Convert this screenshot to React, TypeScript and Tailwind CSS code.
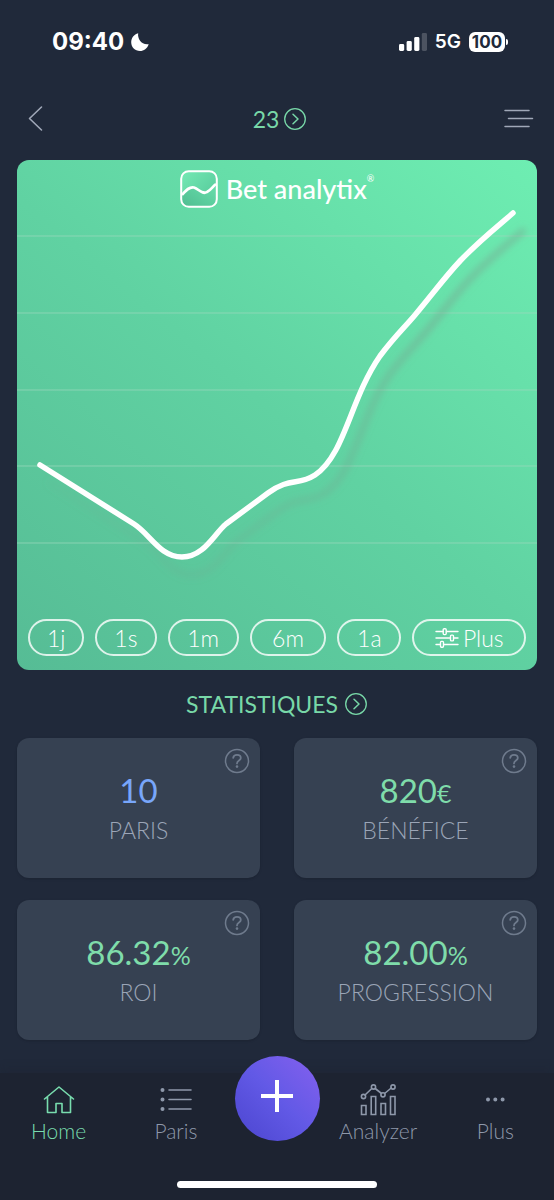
import type { ReactNode } from 'react';

interface RangeOption {
    label: string;
    className: string;
}

interface Stat {
    label: string;
    value: string;
    unit?: string;
    color: string;
}

const ranges: RangeOption[] = [
    { label: '1j', className: 'flex-[52_1_0%]' },
    { label: '1s', className: 'flex-[57_1_0%]' },
    { label: '1m', className: 'flex-[67_1_0%]' },
    { label: '6m', className: 'flex-[72_1_0%]' },
    { label: '1a', className: 'flex-[60_1_0%]' },
];

const stats: Stat[] = [
    { label: 'PARIS', value: '10', color: 'text-[#78a6fa]' },
    { label: 'BÉNÉFICE', value: '820', unit: '€', color: 'text-[#7fdcaa]' },
    { label: 'ROI', value: '86.32', unit: '%', color: 'text-[#7fdcaa]' },
    { label: 'PROGRESSION', value: '82.00', unit: '%', color: 'text-[#7fdcaa]' },
];

const gridLines = [28, 105, 182, 258, 335];

const curve =
    'M23 257 L117 316 C133 326 143 349 165 349 C187 349 197 326 209 316 L251 285 C273 269 281 278 298 267 C328 247 333 191 363 148 C378 128 388 119 398 107 C418 83 428 69 443 53 C463 32 480 19 496 5';

function CircleChevron() {
    return (
        <svg className="size-6" viewBox="0 0 24 24" fill="none" stroke="currentColor" strokeLinecap="round" strokeLinejoin="round" aria-hidden="true">
            <circle cx="12" cy="12" r="10.3" strokeWidth="1.3" />
            <path d="M10 7.2 15 12 10 16.8" strokeWidth="1.5" />
        </svg>
    );
}

function StatusBar() {
    return (
        <div className="flex h-[84px] items-center justify-between pl-13 pr-[46px] font-['Inter',sans-serif] text-white">
            <div className="flex items-center gap-1.5">
                <span className="text-[24px] font-bold leading-8">09:40</span>
                <svg className="size-5" viewBox="0 0 20 20" fill="currentColor" aria-hidden="true">
                    <path d="M8.2 1.3C7.2 6.8 11.8 13.4 18.7 12.2C17.2 16.5 13.9 19 10 19C5 19 1.2 15.2 1.2 10.3C1.2 6 4 2.5 8.2 1.3Z" />
                </svg>
            </div>
            <div className="flex items-center gap-2">
                <svg className="h-5 w-7" viewBox="0 0 28 20" fill="currentColor" aria-hidden="true">
                    <rect x="0" y="12" width="5.2" height="7" rx="1.4" />
                    <rect x="7.6" y="9" width="5.2" height="10" rx="1.4" />
                    <rect x="15.2" y="5" width="5.2" height="14" rx="1.4" />
                    <rect x="22.8" y="1" width="5.2" height="18" rx="1.4" opacity="0.2" />
                </svg>
                <span className="text-[19px] font-semibold leading-6">5G</span>
                <div className="flex items-center gap-px">
                    <span className="flex h-5 w-9 items-center justify-center rounded-md bg-white text-[17px] font-bold leading-5 text-[#20293a]">100</span>
                    <span className="h-1.5 w-0.5 rounded-r bg-white" />
                </div>
            </div>
        </div>
    );
}

function Header() {
    return (
        <header className="flex h-[69px] items-center justify-between pl-[26px] pr-5">
            <button type="button" aria-label="Retour" className="w-8 text-[#a0a8b8]">
                <svg className="h-7 w-5" viewBox="0 0 20 28" fill="none" stroke="currentColor" strokeWidth="1.6" strokeLinecap="round" strokeLinejoin="round">
                    <path d="M15.5 2 3.5 13.5 15.5 25" />
                </svg>
            </button>
            <button type="button" className="flex items-center gap-1 text-[#78d8a8]">
                <span className="text-[23px] leading-7">23</span>
                <CircleChevron />
            </button>
            <button type="button" aria-label="Menu" className="w-8 text-[#a0a8b8]">
                <svg className="h-6 w-8" viewBox="0 0 32 24" fill="none" stroke="currentColor" strokeWidth="1.5" strokeLinecap="round">
                    <path d="M3 3.5H27M6.5 11.5H30.5M3 19.5H27" />
                </svg>
            </button>
        </header>
    );
}

function Logo() {
    return (
        <div className="flex items-center justify-center gap-2 text-white">
            <svg className="size-[38px]" viewBox="0 0 38 38" fill="none" aria-hidden="true">
                <defs>
                    <linearGradient id="logo-top" x1="0" y1="0" x2="1" y2="1">
                        <stop offset="0" stopColor="#74e9b4" />
                        <stop offset="1" stopColor="#52c597" />
                    </linearGradient>
                    <linearGradient id="logo-bottom" x1="0" y1="1" x2="1" y2="0">
                        <stop offset="0" stopColor="#50bd91" />
                        <stop offset="1" stopColor="#68dfac" />
                    </linearGradient>
                </defs>
                <rect x="1.5" y="1.5" width="35" height="35" rx="7" fill="url(#logo-top)" />
                <path d="M2 25C7 19 10 16.5 14 17.5C19 19 22 25 27 22C31 20 33 16 36 14V30Q36 36 30 36H8Q2 36 2 30Z" fill="url(#logo-bottom)" />
                <rect x="1.2" y="1.2" width="35.6" height="35.6" rx="7.5" stroke="currentColor" strokeWidth="2" />
                <path d="M2 25C7 19 10 16.5 14 17.5C19 19 22 25 27 22C31 20 33 16 36 14" stroke="currentColor" strokeWidth="2.6" />
            </svg>
            <div className="flex items-start">
                <span className="text-[27px] font-medium leading-8">Bet analytix</span>
                <span className="text-[9px] leading-3">®</span>
            </div>
        </div>
    );
}

function ProfitChart() {
    return (
        <svg className="w-full overflow-visible" viewBox="0 0 520 402" fill="none" role="img" aria-label="Évolution du bénéfice">
            <defs>
                <filter id="curve-shadow" x="-10%" y="-10%" width="120%" height="130%">
                    <feGaussianBlur stdDeviation="3.5" />
                </filter>
                <linearGradient id="shadow-fade" gradientUnits="userSpaceOnUse" x1="23" y1="0" x2="496" y2="0">
                    <stop offset="0" stopColor="#7a9c8c" stopOpacity="0.08" />
                    <stop offset="0.55" stopColor="#7a9c8c" stopOpacity="0.28" />
                    <stop offset="0.8" stopColor="#7a9c8c" stopOpacity="0.5" />
                    <stop offset="1" stopColor="#7a9c8c" stopOpacity="0.5" />
                </linearGradient>
            </defs>
            {gridLines.map((y) => (
                <path key={y} d={`M0 ${y}H520`} stroke="#9dd8bd" strokeOpacity="0.7" />
            ))}
            <path d={curve} transform="translate(10 18)" stroke="url(#shadow-fade)" strokeWidth="6" strokeLinecap="round" filter="url(#curve-shadow)" />
            <path d={curve} stroke="#fff" strokeWidth="5.5" strokeLinecap="round" strokeLinejoin="round" />
        </svg>
    );
}

function ChartCard() {
    return (
        <section className="rounded-xl bg-linear-[40deg] from-[#56bc95] via-[#60d2a2] to-[#6eeeb2] pt-2.5 pb-3.5">
            <Logo />
            <ProfitChart />
            <div className="mt-[9px] flex gap-[11px] px-[11px]">
                {ranges.map((range) => (
                    <button
                        key={range.label}
                        type="button"
                        className={`${range.className} h-[37px] rounded-full border-2 border-white/80 text-[23px] leading-7 font-light text-white`}
                    >
                        {range.label}
                    </button>
                ))}
                <button
                    type="button"
                    className="flex h-[37px] flex-[109_1_0%] items-center justify-center gap-1 rounded-full border-2 border-white/80 text-[23px] leading-7 font-light text-white"
                >
                    <svg className="h-5 w-6" viewBox="0 0 24 20" fill="none" stroke="currentColor" strokeWidth="1.4" strokeLinecap="round" aria-hidden="true">
                        <path d="M1 3.5H8M12 3.5H23M1 10H15M19 10H23M1 16.5H5M9 16.5H23" />
                        <rect x="8.2" y="0.8" width="3" height="5.8" rx="1" />
                        <rect x="15.5" y="7.1" width="3" height="5.8" rx="1" />
                        <rect x="5.5" y="13.4" width="3" height="5.8" rx="1" />
                    </svg>
                    Plus
                </button>
            </div>
        </section>
    );
}

function StatCard({ label, value, unit, color }: Stat) {
    return (
        <div className="relative flex h-[140px] flex-col items-center rounded-xl bg-[#364152] pt-[30px] shadow-sm">
            <button type="button" aria-label={`Aide ${label}`} className="absolute top-2.5 right-2.5 text-[#6f7b8d]">
                <svg className="size-[26px]" viewBox="0 0 26 26" fill="none" stroke="currentColor" strokeWidth="1.5" strokeLinecap="round">
                    <circle cx="13" cy="13" r="11.5" />
                    <path d="M9.2 9.8C9.5 7.8 11 6.8 13 6.8C15.2 6.8 16.8 8 16.8 9.9C16.8 12.6 13 12.3 13 15.4" strokeWidth="1.8" />
                    <circle cx="13" cy="18.6" r="1.3" fill="currentColor" stroke="none" />
                </svg>
            </button>
            <p className={`text-[33px] leading-11 ${color}`}>
                {value}
                {unit && <span className="text-[25px] leading-none">{unit}</span>}
            </p>
            <p className="mt-1 text-[23px] leading-7 font-light text-[#9ba5b7]">{label}</p>
        </div>
    );
}

function NavItem({ label, active, children }: { label: string; active?: boolean; children: ReactNode }) {
    return (
        <a href="#" className={`flex flex-col items-center pt-2 ${active ? 'text-[#78dcae]' : 'text-[#8e98aa]'}`}>
            <svg className="h-9 w-10" viewBox="0 0 40 36" fill="none" stroke="currentColor" strokeWidth="1.6" strokeLinecap="round" strokeLinejoin="round" aria-hidden="true">
                {children}
            </svg>
            <span className="text-[21px] leading-7 font-light">{label}</span>
        </a>
    );
}

function BottomNav() {
    return (
        <nav className="mt-auto bg-[#1d2331] pb-3 shadow-[0_-4px_8px_rgba(29,35,49,0.35)]">
            <div className="grid h-[108px] grid-cols-[1fr_1fr_85px_1fr_1fr]">
                <NavItem label="Home" active>
                    <path d="M5.5 18 20 6 34.5 18M8.5 16V31.5H17V22.5H23V31.5H31.5V16" />
                </NavItem>
                <NavItem label="Paris">
                    <path d="M13 9H35M13 18.5H35M13 28H35" />
                    <path d="M6.5 9H6.51M6.5 18.5H6.51M6.5 28H6.51" strokeWidth="4" />
                </NavItem>
                <button
                    type="button"
                    aria-label="Ajouter"
                    className="-mt-[17px] flex size-[85px] items-center justify-center rounded-full bg-linear-to-tr from-[#4b45cf] via-[#6259e6] to-[#8560ee] pb-1.5 text-white"
                >
                    <svg className="size-8" viewBox="0 0 32 32" fill="none" stroke="currentColor" strokeWidth="4">
                        <path d="M16 0V32M0 16H32" />
                    </svg>
                </button>
                <NavItem label="Analyzer">
                    <path d="M3.5 24.5H8V33.5H3.5ZM13.2 15.5H17.7V33.5H13.2ZM23 22.5H27.5V33.5H23ZM32.5 15.5H37V33.5H32.5Z" strokeLinejoin="miter" />
                    <path d="M7 14 13.8 7.5M17.2 7.5 23.5 12.5M26.6 12.5 33.2 7" />
                    <circle cx="5.5" cy="15.5" r="2.1" />
                    <circle cx="15.5" cy="6" r="2.1" />
                    <circle cx="25" cy="13.8" r="2.1" />
                    <circle cx="35" cy="6" r="2.1" />
                </NavItem>
                <NavItem label="Plus">
                    <path d="M13 18.5H13.01M20.3 18.5H20.31M27.6 18.5H27.61" strokeWidth="4" />
                </NavItem>
            </div>
            <div className="mx-auto h-[7px] w-[36%] rounded-full bg-white" />
        </nav>
    );
}

export default function App() {
    return (
        <div className="flex min-h-screen flex-col bg-[#20293a] font-['Lato',sans-serif]">
            <StatusBar />
            <Header />
            <main className="px-[17px] pt-[7px] pb-8">
                <ChartCard />
                <h2 className="flex h-[68px] items-center justify-center">
                    <a href="#" className="flex items-center gap-1.5 text-[23px] leading-7 font-normal text-[#78d8a8]">
                        STATISTIQUES
                        <CircleChevron />
                    </a>
                </h2>
                <div className="grid grid-cols-2 gap-x-[34px] gap-y-[22px]">
                    {stats.map((stat) => (
                        <StatCard key={stat.label} {...stat} />
                    ))}
                </div>
            </main>
            <BottomNav />
        </div>
    );
}
